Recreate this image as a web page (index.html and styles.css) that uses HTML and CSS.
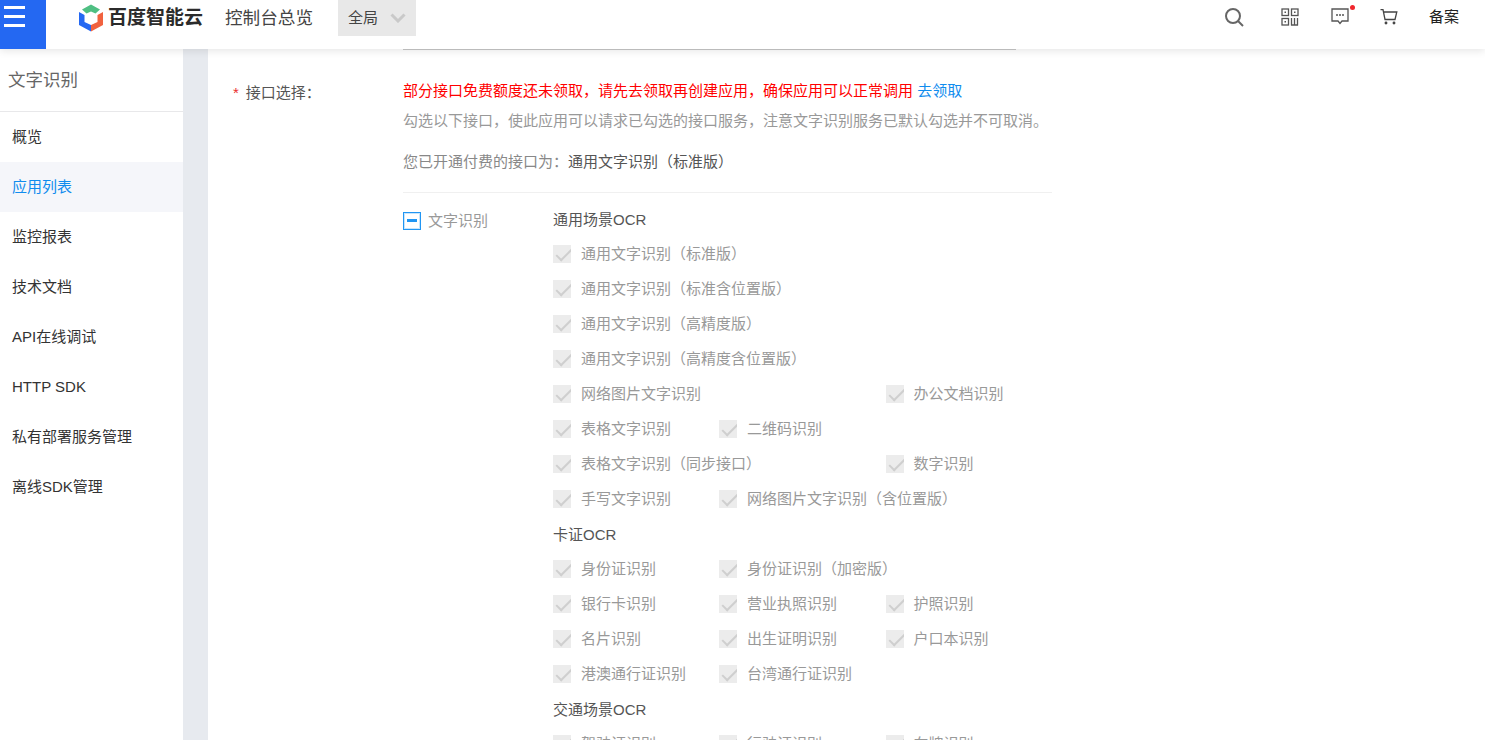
FILE: index.html
```html
<!DOCTYPE html>
<html lang="zh">
<head>
<meta charset="utf-8">
<title>文字识别</title>
<link rel="stylesheet" href="styles.css">
</head>
<body>
<header class="topbar">
  <div class="menu-btn"><span></span><span></span><span></span></div>
  <div class="logo">
    <svg width="26" height="28" viewBox="0 0 26 28">
      <path d="M13 0.5 L22 5.5 L17.5 9.5 L13 7.5 L8.5 9.5 L4 5.5 Z" fill="#4fbf83"/>
      <path d="M1 8 L6.500 11 L6.500 18 L13 21 L13 27.500 L1 21 Z" fill="#2468f2"/>
      <path d="M25 8 L19.500 11 L19.500 18 L13 21 L13 27.500 L25 21 Z" fill="#f1623f"/>
    </svg>
    <span class="logo-text">百度智能云</span>
  </div>
  <div class="console-title">控制台总览</div>
  <div class="region">
    <span>全局</span>
    <svg width="16" height="10" viewBox="0 0 16 10"><path d="M1.500 1.500 L8 8 L14.500 1.500" fill="none" stroke="#c9c9c9" stroke-width="3"/></svg>
  </div>
  <nav class="top-actions">
    <svg class="act-search" width="20" height="20" viewBox="0 0 20 20"><circle cx="9" cy="9" r="7" fill="none" stroke="#666" stroke-width="2"/><path d="M14 14 L19 19" stroke="#666" stroke-width="2"/></svg>
    <svg class="act-qr" width="18" height="18" viewBox="0 0 18 18" fill="none" stroke="#555" stroke-width="1.300"><rect x="1" y="1" width="6.500" height="6.500"/><rect x="10.500" y="1" width="6.500" height="6.500"/><rect x="1" y="10.500" width="6.500" height="6.500"/><rect x="3.500" y="3.500" width="1.500" height="1.500" fill="#555" stroke="none"/><rect x="13" y="3.500" width="1.500" height="1.500" fill="#555" stroke="none"/><rect x="3.500" y="13" width="1.500" height="1.500" fill="#555" stroke="none"/><path d="M10.500 10 V17.500 M13.500 10 V17.500 M16.500 10 V17.500 M10 17 H17"/></svg>
    <span class="act-msg">
      <svg width="18" height="17" viewBox="0 0 18 17" fill="none" stroke="#555" stroke-width="1.300"><path d="M1 1 H17 V13 H11 L9 15.500 L7 13 H1 Z"/><path d="M5 7 H7 M8 7 H10 M11 7 H13"/></svg>
      <i class="dot"></i>
    </span>
    <svg class="act-cart" width="18" height="16" viewBox="0 0 18 16" fill="none" stroke="#444" stroke-width="1.300"><path d="M0.500 0.700 H3 L5 10.500 H15 L16.800 3 H3.500"/><circle cx="6" cy="14" r="0.800" fill="#444"/><circle cx="14" cy="14" r="0.800" fill="#444"/></svg>
    <span class="act-text">备案</span>
  </nav>
</header>

<div class="shell">
  <aside class="sidebar">
    <h2 class="side-title">文字识别</h2>
    <ul class="side-nav">
      <li>概览</li>
      <li class="active">应用列表</li>
      <li>监控报表</li>
      <li>技术文档</li>
      <li>API在线调试</li>
      <li>HTTP SDK</li>
      <li>私有部署服务管理</li>
      <li>离线SDK管理</li>
    </ul>
  </aside>
  <div class="gutter"></div>
  <main class="content">
    <div class="input-line"></div>
    <div class="field">
      <div class="field-label"><em>*</em>接口选择：</div>
      <div class="field-body">
        <p class="notice">部分接口免费额度还未领取，请先去领取再创建应用，确保应用可以正常调用 <a>去领取</a></p>
        <p class="hint">勾选以下接口，使此应用可以请求已勾选的接口服务，注意文字识别服务已默认勾选并不可取消。</p>
        <p class="paid">您已开通付费的接口为：<span>通用文字识别（标准版）</span></p>
        <div class="divider"></div>
        <div class="group">
          <div class="group-name">
            <span class="box-partial"></span>
            <span>文字识别</span>
          </div>
          <div class="group-list">
            <h4>通用场景OCR</h4>
            <div class="grid">
              <label class="full"><i class="cb"></i>通用文字识别（标准版）</label>
              <label class="full"><i class="cb"></i>通用文字识别（标准含位置版）</label>
              <label class="full"><i class="cb"></i>通用文字识别（高精度版）</label>
              <label class="full"><i class="cb"></i>通用文字识别（高精度含位置版）</label>
              <label class="two"><i class="cb"></i>网络图片文字识别</label>
              <label><i class="cb"></i>办公文档识别</label>
              <label><i class="cb"></i>表格文字识别</label>
              <label class="end"><i class="cb"></i>二维码识别</label>
              <label class="two"><i class="cb"></i>表格文字识别（同步接口）</label>
              <label><i class="cb"></i>数字识别</label>
              <label><i class="cb"></i>手写文字识别</label>
              <label class="end"><i class="cb"></i>网络图片文字识别（含位置版）</label>
            </div>
            <h4>卡证OCR</h4>
            <div class="grid">
              <label><i class="cb"></i>身份证识别</label>
              <label class="end"><i class="cb"></i>身份证识别（加密版）</label>
              <label><i class="cb"></i>银行卡识别</label>
              <label><i class="cb"></i>营业执照识别</label>
              <label><i class="cb"></i>护照识别</label>
              <label><i class="cb"></i>名片识别</label>
              <label><i class="cb"></i>出生证明识别</label>
              <label><i class="cb"></i>户口本识别</label>
              <label><i class="cb"></i>港澳通行证识别</label>
              <label class="end"><i class="cb"></i>台湾通行证识别</label>
            </div>
            <h4>交通场景OCR</h4>
            <div class="grid">
              <label><i class="cb"></i>驾驶证识别</label>
              <label><i class="cb"></i>行驶证识别</label>
              <label><i class="cb"></i>车牌识别</label>
            </div>
          </div>
        </div>
      </div>
    </div>
  </main>
</div>
</body>
</html>
```

FILE: styles.css
```css
* { box-sizing: border-box; }
html, body { margin: 0; padding: 0; height: 740px; overflow: hidden; background: #fff; }
body { font: 15px/20px "Liberation Sans", "Noto Sans CJK SC", sans-serif; color: #333; }

.topbar {
  height: 49px;
  display: flex;
  align-items: flex-start;
  background: #fff;
  box-shadow: 0 2px 8px rgba(0, 0, 0, .1);
  position: relative;
  z-index: 2;
}
.menu-btn {
  width: 46px;
  height: 49px;
  background: #2468f2;
  display: flex;
  flex-direction: column;
  gap: 6px;
  padding: 6px 21px 0 4px;
}
.menu-btn span { display: block; height: 3px; background: #fff; flex: none; }
.logo { display: flex; align-items: center; margin-left: 32px; height: 36px; gap: 4px; }
.logo-text { font-size: 19px; font-weight: 700; color: #2b2b2b; letter-spacing: 0; white-space: nowrap; }
.console-title { margin-left: 22px; font-size: 17.6px; line-height: 36px; color: #444; }
.region {
  margin-left: 25px;
  width: 78px;
  height: 36px;
  background: #e8e8e8;
  display: flex;
  align-items: center;
  gap: 12px;
  padding-left: 10px;
  color: #444;
}
.top-actions {
  margin-left: auto;
  display: flex;
  align-items: center;
  height: 33px;
  padding-right: 26px;
}
.act-search { margin-right: 37px; }
.act-qr { margin-right: 32px; }
.act-msg { position: relative; display: flex; margin-right: 31px; }
.dot { position: absolute; top: -3px; right: -6px; width: 5px; height: 5px; border-radius: 50%; background: #f0262d; }
.act-cart { margin-right: 31px; }
.act-text { color: #222; }

.shell { display: flex; height: 691px; }
.sidebar { width: 183px; flex: none; background: #fff; }
.side-title {
  margin: 0;
  height: 63px;
  padding: 20px 0 0 8px;
  font-size: 17.5px;
  line-height: 22px;
  font-weight: 400;
  color: #666;
  border-bottom: 1px solid #e8e8ea;
}
.side-nav { list-style: none; margin: 0; padding: 0; }
.side-nav li { height: 50px; line-height: 49px; padding-left: 12px; color: #333; }
.side-nav li.active { background: #f5f6fa; color: #108cee; }
.gutter { width: 25px; flex: none; background: #e7eaef; }

.content { flex: 1; overflow: hidden; padding-left: 25px; }
.input-line { width: 613px; height: 1px; background: #c8c8c8; margin-left: 170px; }
.field { display: flex; margin-top: 30px; }
.field-label { width: 170px; flex: none; color: #555; padding-top: 3px; }
.field-label em { font-style: normal; color: #ea2e2e; margin-right: 7px; }
.field-body { width: 649px; flex: none; padding-top: 1px; }
.notice { margin: 0; color: #f00; white-space: nowrap; }
.notice a { color: #108cee; }
.hint { margin: 10px 0 0; color: #999; white-space: nowrap; }
.paid { margin: 21px 0 0; color: #888; white-space: nowrap; }
.paid span { color: #555; }
.divider { height: 1px; background: #f0f0f0; margin-top: 20px; }
.group { display: flex; margin-top: 17px; }
.group-name { width: 150px; flex: none; display: flex; align-items: flex-start; gap: 7px; color: #999; padding-top: 1px; }
.box-partial {
  width: 18px;
  height: 18px;
  margin-top: 1px;
  border: 1px solid #2196f3;
  outline: 1px solid rgba(33, 150, 243, .25);
  outline-offset: -2px;
  position: relative;
}
.box-partial::after {
  content: "";
  position: absolute;
  left: 3px;
  top: 6px;
  width: 10px;
  height: 3px;
  background: #2196f3;
}
.group-list { flex: 1; }
.group-list h4 { margin: 0; font-weight: 400; font-size: 15px; line-height: 20px; color: #555; height: 20px; }
.grid { display: grid; grid-template-columns: 166px 166.5px 1fr; grid-auto-rows: 35px; padding-top: 8px; }
.grid + h4 { margin-top: 7px; }
.grid label { display: flex; align-items: flex-start; color: #999; white-space: nowrap; padding-top: 6px; height: 35px; }
.grid label.full { grid-column: 1 / -1; }
.grid label.two { grid-column: 1 / 3; }
.grid label.end { grid-column: 2 / -1; }
.cb { width: 18px; height: 18px; margin: 1px 10px 0 0; flex: none; background: #ececec; position: relative; overflow: hidden; }
.cb::after {
  content: "";
  position: absolute;
  left: 7px;
  top: 0;
  width: 6px;
  height: 14px;
  border: solid #cfcfcf;
  border-width: 0 2px 2px 0;
  transform: rotate(45deg);
}
```
